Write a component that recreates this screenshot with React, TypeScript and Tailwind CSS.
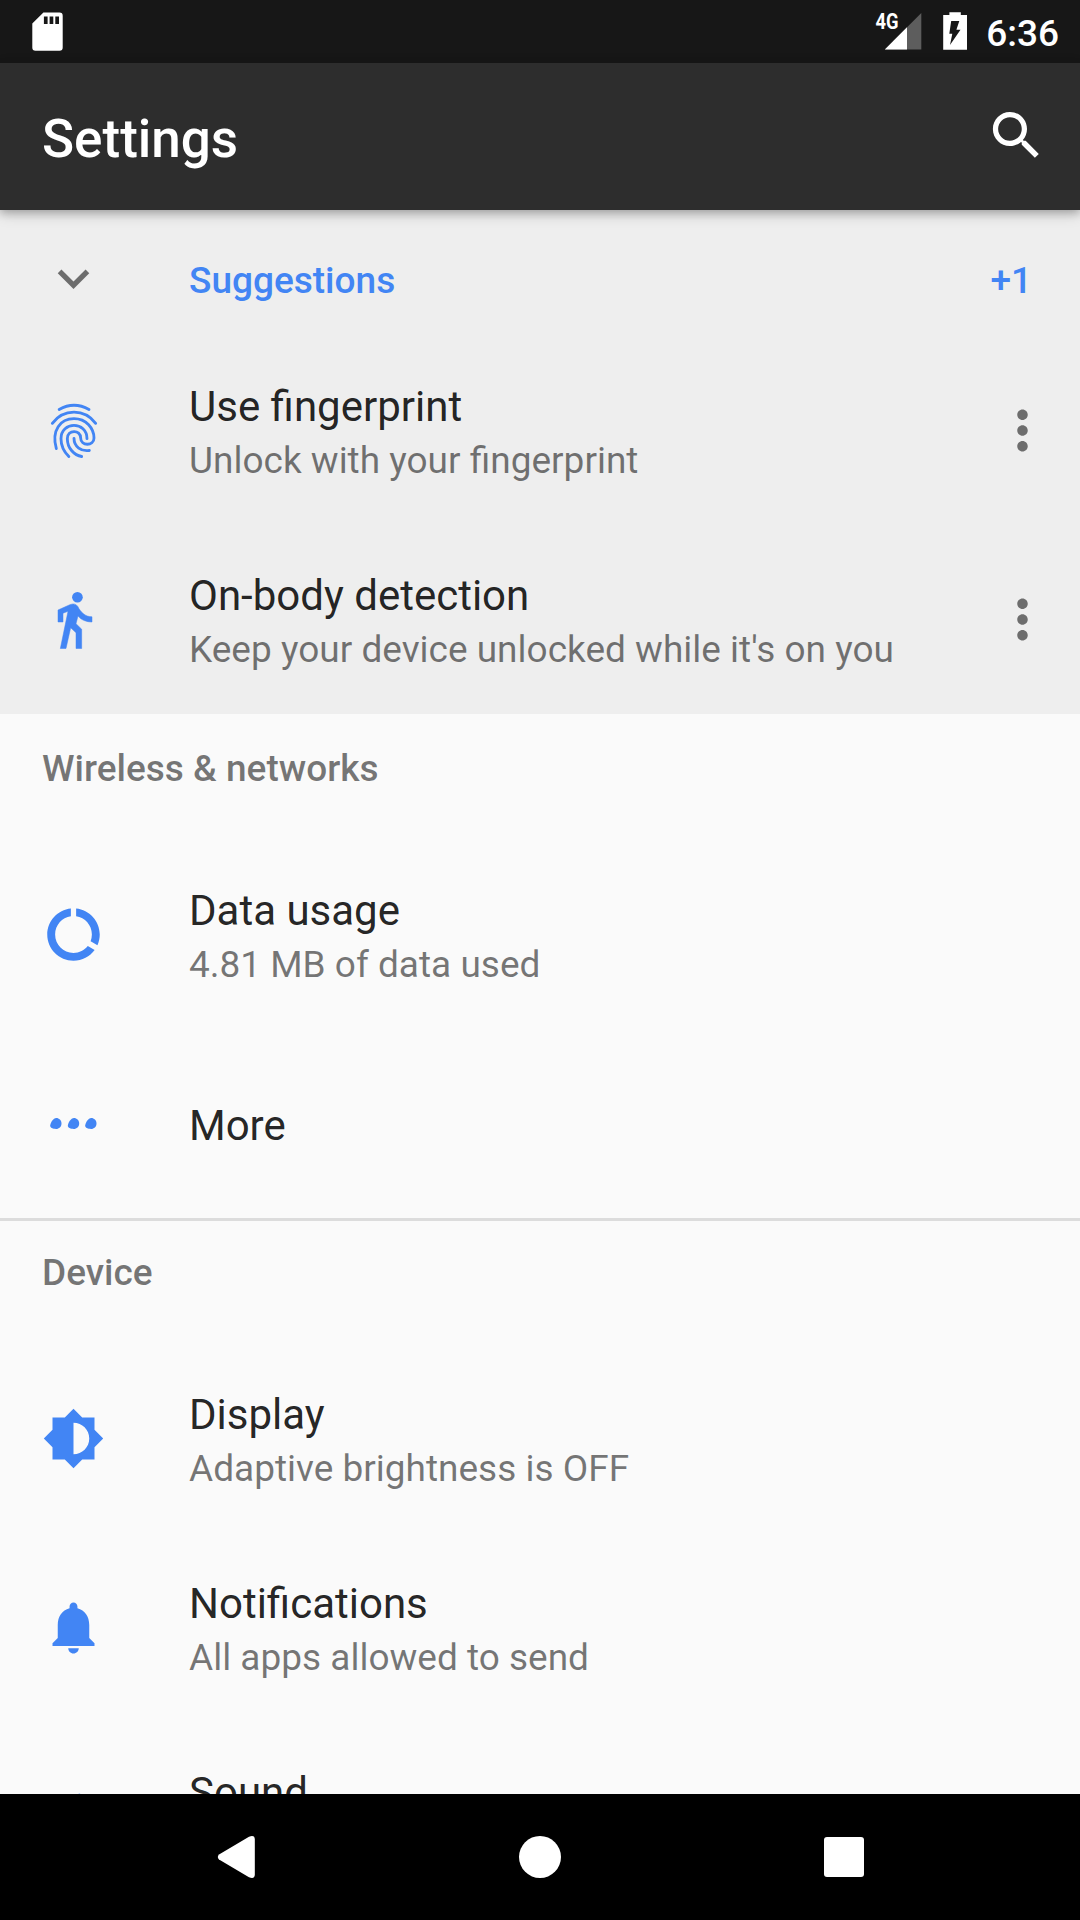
import type { ReactNode } from 'react';

function Glyph({ d, className = '' }: { d: string; className?: string }) {
  return (
    <svg viewBox="0 0 24 24" fill="currentColor" className={`size-[63px] shrink-0 ${className}`}>
      <path d={d} />
    </svg>
  );
}

const SEARCH =
  'M15.5 14h-.79l-.28-.27C15.41 12.59 16 11.11 16 9.5 16 5.91 13.09 3 9.5 3S3 5.91 3 9.5 5.91 16 9.5 16c1.61 0 3.09-.59 4.23-1.57l.27.28v.79l5 4.99L20.49 19l-4.99-5zm-6 0C7.01 14 5 11.99 5 9.5S7.01 5 9.5 5 14 7.01 14 9.5 11.99 14 9.5 14z';
const EXPAND = 'M16.59 8.59L12 13.17 7.41 8.59 6 10l6 6 6-6z';
const MORE_VERT =
  'M12 8c1.1 0 2-.9 2-2s-.9-2-2-2-2 .9-2 2 .9 2 2 2zm0 2c-1.1 0-2 .9-2 2s.9 2 2 2 2-.9 2-2-.9-2-2-2zm0 6c-1.1 0-2 .9-2 2s.9 2 2 2 2-.9 2-2-.9-2-2-2z';
const DATA_USAGE =
  'M13 2.05v3.03c3.39.49 6 3.39 6 6.92 0 .9-.18 1.75-.48 2.54l2.6 1.53c.56-1.24.88-2.62.88-4.07 0-5.18-3.95-9.45-9-9.95zM12 19c-3.87 0-7-3.13-7-7 0-3.53 2.61-6.43 6-6.92V2.05c-5.06.5-9 4.76-9 9.95 0 5.52 4.47 10 9.99 10 3.31 0 6.24-1.61 8.06-4.09l-2.6-1.53C16.17 17.98 14.21 19 12 19z';
const BRIGHTNESS =
  'M20 15.31L23.31 12 20 8.69V4h-4.69L12 .69 8.69 4H4v4.69L.69 12 4 15.31V20h4.69L12 23.31 15.31 20H20v-4.69zM12 18V6c3.31 0 6 2.69 6 6s-2.69 6-6 6z';
const BELL =
  'M12 21.9c1.1 0 2-.9 2-2h-4c0 1.1.9 2 2 2zm6-5.9v-5c0-3.07-1.63-5.64-4.5-6.32V4c0-.83-.67-1.5-1.5-1.5s-1.5.67-1.5 1.5v.68C7.64 5.36 6 7.92 6 11v5l-2 2v1h16v-1l-2-2z';
const VOLUME =
  'M3 9v6h4l5 5V4L7 9H3zm13.5 3c0-1.77-1.02-3.29-2.5-4.03v8.05c1.48-.73 2.5-2.25 2.5-4.02zM14 3.23v2.06c2.89.86 5 3.54 5 6.71s-2.11 5.85-5 6.71v2.06c4.01-.91 7-4.49 7-8.77s-2.99-7.86-7-8.77z';
const DOT =
  'M43 78C51 78 58.500 85 58.500 94.500S51 111 42 111C33 111 24.500 107.500 24.500 101.500C24.500 93 34 78 43 78z';

function Fingerprint() {
  return (
    <svg
      viewBox="0 0 189 189"
      fill="none"
      stroke="currentColor"
      strokeWidth="8.5"
      strokeLinecap="round"
      className="size-[63px]"
    >
      <path d="M51.500 31.500Q96 6 141 31.500" />
      <path d="M31 73Q56 39.500 96 39.500T161 73" />
      <path d="M43 149C27 93 56 59 96 59C133 59 156 88 156 117C156 142 116 142 116 117C116 91 76 91 76 119C76 148 97 169 119 172.500" />
      <path d="M80.500 172.500C65 157 57 138 57 119C57 66 135 66 135 119" />
      <path d="M96 118C96 144 118 158 142 154.500" />
    </svg>
  );
}

function Walk() {
  return (
    <svg viewBox="0 0 189 189" fill="currentColor" className="size-[63px]">
      <circle cx="106.300" cy="27.800" r="16" />
      <path
        stroke="currentColor"
        strokeWidth="1.5"
        d="M48 66L85 49.500Q100 44 107.500 55.500C115 71 129 86.500 150 86.500V102C133 102 118 96 108 84L102 107L119 123.500V181.500H102V134L86 119L72 181.500H55L78 70L63 75.500V102H48z"
      />
    </svg>
  );
}

function MoreDots() {
  return (
    <svg viewBox="0 0 189 189" fill="currentColor" className="size-[63px]">
      <path d={DOT} />
      <path d={DOT} transform="translate(53)" />
      <path d={DOT} transform="translate(105)" />
    </svg>
  );
}

function StatusBar() {
  return (
    <div className="flex h-[63px] shrink-0 items-start justify-between bg-[#171717] pr-[21px] pl-[30px] text-white">
      <svg viewBox="30 0 36 63" className="h-[63px] w-9">
        <path
          fill="currentColor"
          fillRule="evenodd"
          d="M43.4 12.5H59.5a3.2 3.2 0 0 1 3.2 3.2V47.5a3.2 3.2 0 0 1-3.2 3.2H35.5a3.2 3.2 0 0 1-3.2-3.2V23.6zM43.9 16.4v7.6h3.7v-7.6zM49.6 16.4v7.6h3.7v-7.6zM55.3 16.4v7.6h3.7v-7.6z"
        />
      </svg>
      <div className="flex items-start">
        <svg viewBox="874 0 50 63" className="h-[63px] w-[50px]">
          <path d="M921.3 13V49.5H884.8z" fill="#5d5d5d" />
          <path d="M907 27.3V49.5H884.8z" fill="#fff" />
          <text
            x="875.6"
            y="29"
            fill="#fff"
            fontSize="21.5"
            fontWeight="700"
            textLength="23"
            lengthAdjust="spacingAndGlyphs"
          >
            4G
          </text>
        </svg>
        <svg viewBox="941 0 28 63" className="ml-[17px] h-[63px] w-7">
          <path d="M949.4 12.3h11.4V15H967v34.7h-23.8V15h6.2z" fill="#fff" />
          <path d="M951.2 21h8.1l-2.9 8.8h4.1L950 45l2.3-11.3h-3z" fill="#171717" />
        </svg>
        <span className="mt-3 ml-[17px] text-[37px] leading-[43px] font-medium">6:36</span>
      </div>
    </div>
  );
}

function AppBar() {
  return (
    <header className="relative z-10 flex h-[147px] shrink-0 items-start justify-between bg-[#2d2d2d] pr-8 pl-[42px] text-white shadow-[0_3px_8px_rgba(0,0,0,0.22),0_4px_14px_rgba(0,0,0,0.16)]">
      <h1 className="mt-[45px] text-[53px] leading-[62px] font-medium">Settings</h1>
      <Glyph d={SEARCH} className="mt-[41px]" />
    </header>
  );
}

interface RowProps {
  icon: ReactNode;
  title: string;
  summary?: string;
  menu?: boolean;
}

function Row({ icon, title, summary, menu }: RowProps) {
  return (
    <div className="flex h-[189px] shrink-0 items-center pr-[26px] pl-[42px]">
      <div className="w-[147px] text-[#4285f4]">{icon}</div>
      <div className="flex flex-1 flex-col gap-2 pt-[3px] whitespace-nowrap">
        <div className="text-[42px] leading-[49px] text-black/87">{title}</div>
        {summary && <div className="text-[37px] leading-[43px] text-black/54">{summary}</div>}
      </div>
      {menu && <Glyph d={MORE_VERT} className="text-black/54" />}
    </div>
  );
}

function Category({ title }: { title: string }) {
  return (
    <h2 className="h-[126px] pt-[33px] pl-[42px] text-[37px] leading-[43px] font-medium text-black/54">{title}</h2>
  );
}

function NavBar() {
  return (
    <nav className="flex h-[126px] shrink-0 items-center justify-center bg-black text-white">
      <div className="flex w-[304px] justify-center">
        <svg viewBox="0 0 42 44" className="h-11 w-[42px]">
          <path
            fill="currentColor"
            d="M4 19.6L34 1.700Q39.800 -0.500 39.800 4.500V39.500Q39.800 44.500 34 42.300L4 24.400Q1.600 22 4 19.600z"
          />
        </svg>
      </div>
      <div className="flex w-[304px] justify-center">
        <div className="size-[42px] rounded-full bg-white" />
      </div>
      <div className="flex w-[304px] justify-center">
        <div className="size-10 rounded-[3px] bg-white" />
      </div>
    </nav>
  );
}

export default function App() {
  return (
    <div className="flex h-[1920px] w-[1080px] flex-col overflow-hidden bg-[#fafafa] font-['Roboto',sans-serif]">
      <StatusBar />
      <AppBar />
      <main className="min-h-0 flex-1 overflow-hidden">
        <section className="bg-[#eeeeee]">
          <div className="flex h-[126px] items-start pr-12 pl-[42px] text-[37px] leading-[43px] font-medium text-[#4285f4]">
            <div className="w-[147px] pt-[37px] text-black/54">
              <Glyph d={EXPAND} />
            </div>
            <span className="flex-1 pt-[49px]">Suggestions</span>
            <span className="pt-[49px]">+1</span>
          </div>
          <Row icon={<Fingerprint />} title="Use fingerprint" summary="Unlock with your fingerprint" menu />
          <Row
            icon={<Walk />}
            title="On-body detection"
            summary="Keep your device unlocked while it's on you"
            menu
          />
        </section>
        <section>
          <Category title="Wireless & networks" />
          <Row icon={<Glyph d={DATA_USAGE} />} title="Data usage" summary="4.81 MB of data used" />
          <Row icon={<MoreDots />} title="More" />
        </section>
        <section className="shadow-[inset_0_3px_0_#dcdcdc]">
          <Category title="Device" />
          <Row icon={<Glyph d={BRIGHTNESS} />} title="Display" summary="Adaptive brightness is OFF" />
          <Row icon={<Glyph d={BELL} />} title="Notifications" summary="All apps allowed to send" />
          <Row icon={<Glyph d={VOLUME} />} title="Sound" summary="Ringer volume at 71%" />
        </section>
      </main>
      <NavBar />
    </div>
  );
}
